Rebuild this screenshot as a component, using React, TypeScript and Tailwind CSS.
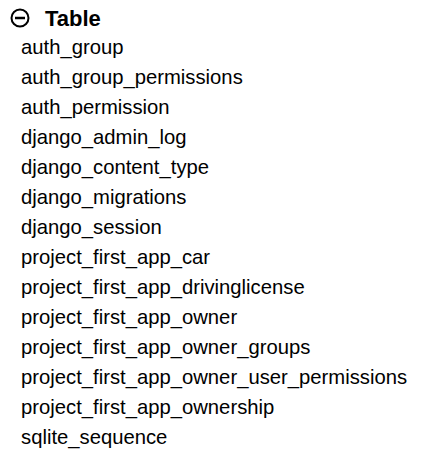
const tables = [
  'auth_group',
  'auth_group_permissions',
  'auth_permission',
  'django_admin_log',
  'django_content_type',
  'django_migrations',
  'django_session',
  'project_first_app_car',
  'project_first_app_drivinglicense',
  'project_first_app_owner',
  'project_first_app_owner_groups',
  'project_first_app_owner_user_permissions',
  'project_first_app_ownership',
  'sqlite_sequence',
];

export default function App() {
  return (
    <div className="w-[421px] h-[460px] bg-white text-black font-['Liberation_Sans',Arial,sans-serif] pl-[10px] pt-[4px]">
      <div className="flex items-center gap-[15px] h-[28px]">
        <svg width="20" height="20" viewBox="0 0 20 20" fill="none" stroke="black" strokeWidth="2">
          <circle cx="10" cy="10" r="8.5" />
          <line x1="5" y1="10" x2="15" y2="10" strokeWidth="2.5" />
        </svg>
        <span className="text-[22px] font-bold">Table</span>
      </div>
      <ul className="pl-[11px]">
        {tables.map((t) => (
          <li key={t} className="text-[20.25px] leading-[30px]">
            {t}
          </li>
        ))}
      </ul>
    </div>
  );
}
